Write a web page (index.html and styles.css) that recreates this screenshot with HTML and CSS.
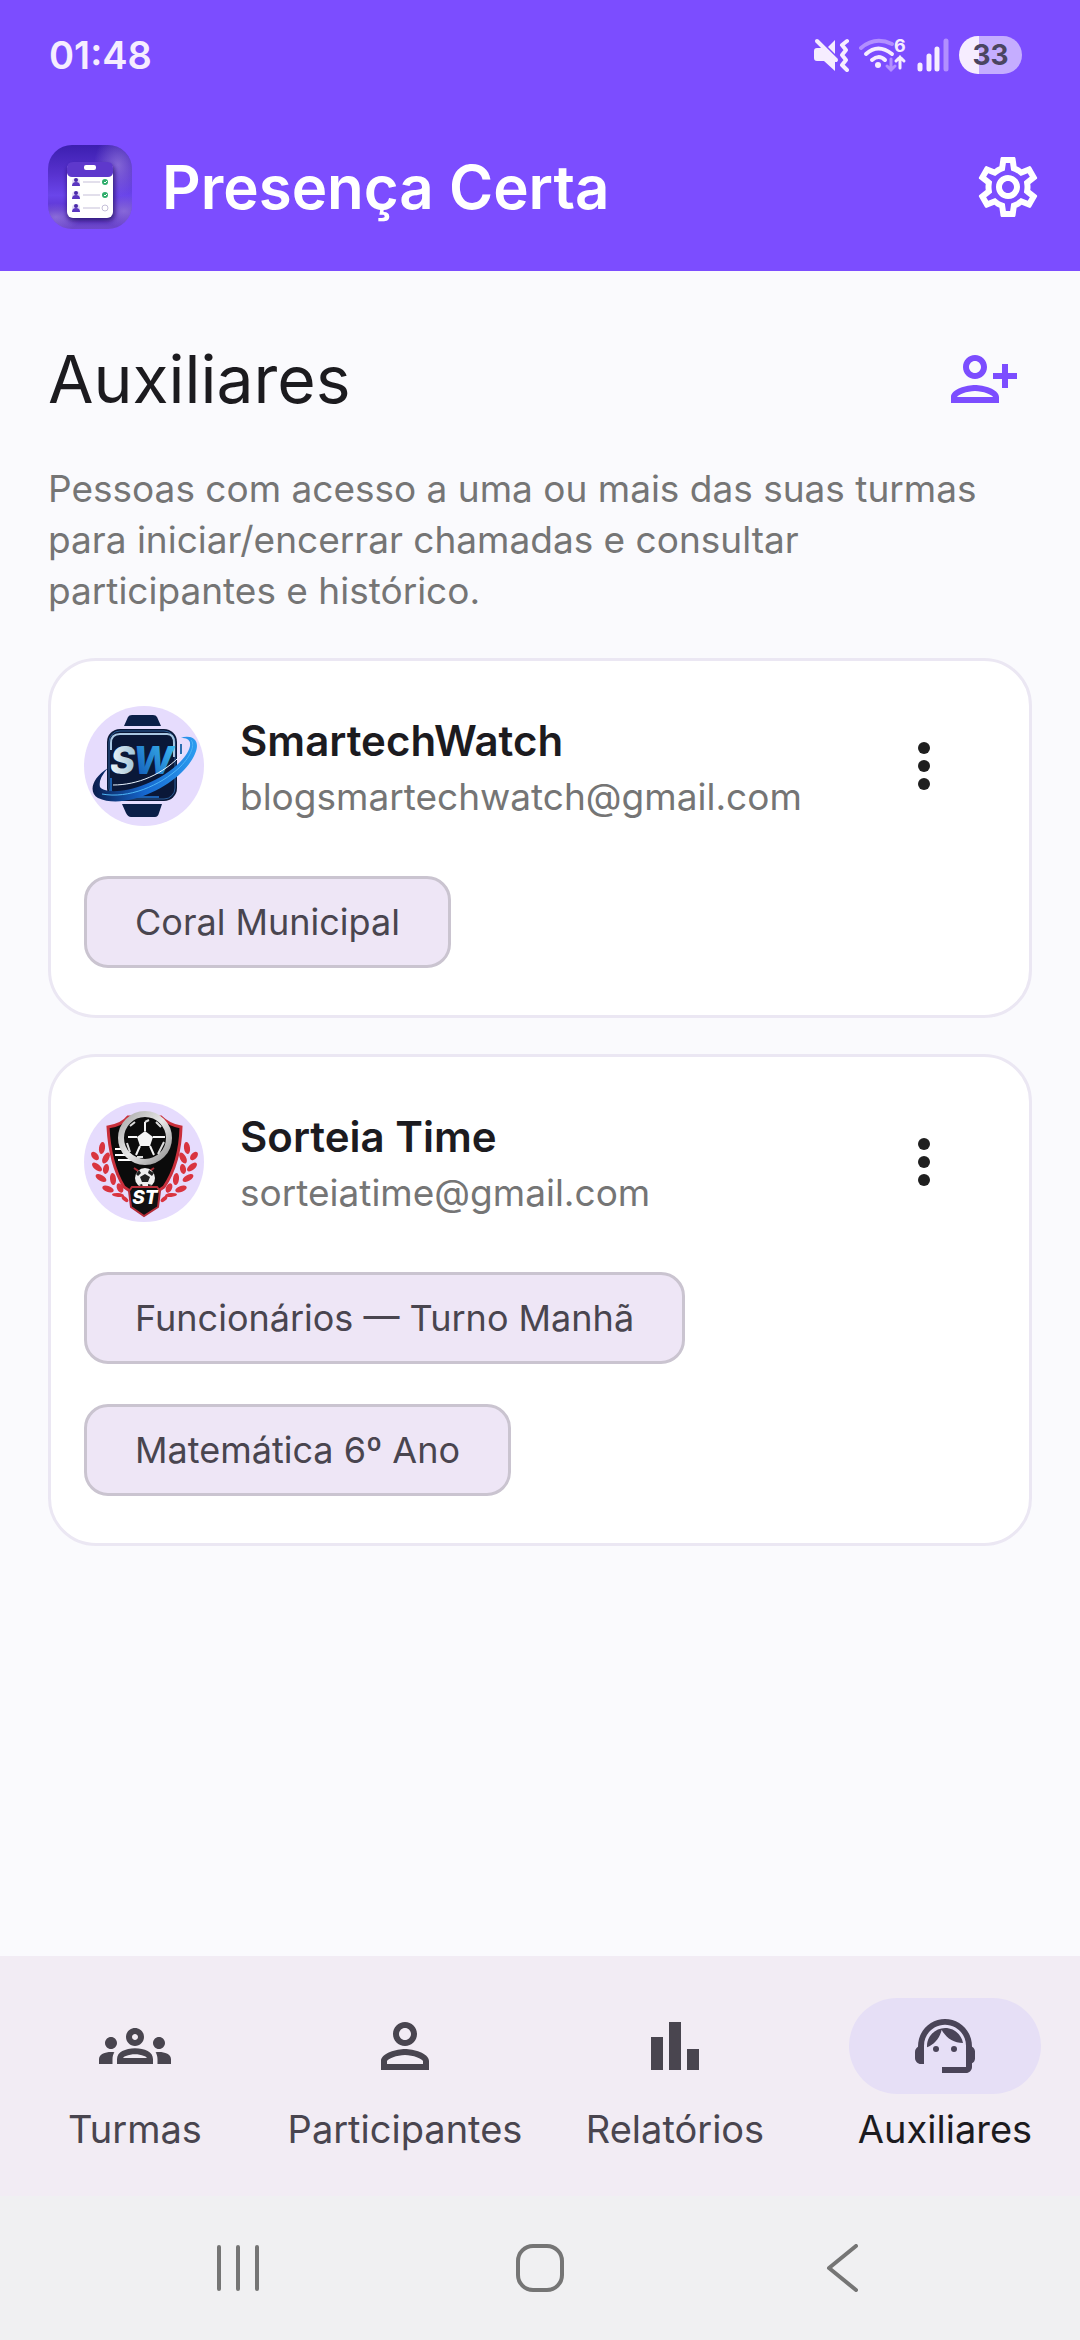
FILE: index.html
```html
<!DOCTYPE html>
<html lang="pt-BR">
<head>
<meta charset="utf-8">
<meta name="viewport" content="width=device-width, initial-scale=1">
<title>Presença Certa</title>
<link rel="stylesheet" href="styles.css">
</head>
<body>
<header class="top">
  <div class="status">
    <span class="clock">01:48</span>
    <div class="status-icons">
      <svg width="36" height="34" viewBox="0 0 36 34" aria-label="Vibrar">
        <path d="M1 13q0-3 3-3h5l13 13v10L11 23H4q-3 0-3-3z" fill="#f6edff"/>
        <path d="M15 9l7-7v14z" fill="#f6edff"/>
        <path d="M4 3l19 19" stroke="#f6edff" stroke-width="4" stroke-linecap="round"/>
        <path d="M34 3l-5 4 4 5-4 5 4 5-4 5 5 5" fill="none" stroke="#f6edff" stroke-width="4" stroke-linecap="round" stroke-linejoin="round"/>
      </svg>
      <svg class="wifi" width="48" height="44" viewBox="0 -4 48 44" aria-label="Wi-Fi">
        <path d="M2 11q14-12 31-4" fill="none" stroke="#b28fff" stroke-width="4" stroke-linecap="round"/>
        <path d="M7 17q12-11 26 0M13 23q7-6 13 0" fill="none" stroke="#f6edff" stroke-width="4" stroke-linecap="round"/>
        <circle cx="19" cy="28" r="3" fill="#f6edff"/>
        <path d="M32 22v11M28 29l4 4 4-4" fill="none" stroke="#b28fff" stroke-width="3" stroke-linecap="round"/>
        <path d="M41 31V20M37 24l4-4 4 4" fill="none" stroke="#f6edff" stroke-width="3" stroke-linecap="round"/>
        <text x="35" y="15" class="wifi-num">6</text>
      </svg>
      <svg width="32" height="34" viewBox="0 0 32 34" aria-label="Sinal">
        <path d="M3 27v4M12 18v13M20 11v20" stroke="#f6edff" stroke-width="5" stroke-linecap="round"/>
        <path d="M29 3v28" stroke="#b28fff" stroke-width="5" stroke-linecap="round"/>
      </svg>
      <span class="battery">33</span>
    </div>
  </div>
  <div class="appbar">
    <svg class="logo" viewBox="0 0 84 84" aria-hidden="true">
      <defs>
        <linearGradient id="lg1" x1="0" y1="0" x2="0" y2="1">
          <stop offset="0" stop-color="#3c1fb0"/><stop offset=".35" stop-color="#5832cf"/><stop offset=".6" stop-color="#6a45ea"/><stop offset=".78" stop-color="#5b33cf"/><stop offset="1" stop-color="#6e49c9"/>
        </linearGradient>
        <radialGradient id="lg2"><stop offset="0" stop-color="#a58ce0" stop-opacity=".6"/><stop offset="1" stop-color="#a58ce0" stop-opacity="0"/></radialGradient>
        <filter id="sh" x="-30%" y="-30%" width="160%" height="160%"><feGaussianBlur stdDeviation="2"/></filter>
        <clipPath id="lc"><rect width="84" height="84" rx="24"/></clipPath>
      </defs>
      <g clip-path="url(#lc)">
        <rect width="84" height="84" fill="url(#lg1)"/>
        <ellipse cx="70" cy="20" rx="24" ry="32" fill="url(#lg2)"/>
        <ellipse cx="76" cy="66" rx="28" ry="16" fill="url(#lg2)"/>
        <ellipse cx="8" cy="72" rx="26" ry="14" fill="url(#lg2)"/>
        <rect x="19" y="20" width="48" height="56" rx="7" fill="#24105f" opacity=".7" filter="url(#sh)"/>
        <rect x="19" y="18" width="46" height="55" rx="6" fill="#fff"/>
        <path d="M19 28v-5q0-6 6-6h34q6 0 6 6v5q-1 4-5 4H24q-4 0-5-4z" fill="#5e38cc"/>
        <rect x="36" y="20" width="12" height="5" rx="2" fill="#fff"/>
        <g id="lrow">
          <circle cx="28" cy="37" r="4" fill="#e4dcf8"/>
          <circle cx="28" cy="35" r="2" fill="#4a2aa8"/><path d="M24 41q0-4 4-4t4 4z" fill="#5a36c0"/>
          <path d="M35 37h17" stroke="#c5bfd8" stroke-width="1"/>
        </g>
        <use href="#lrow" y="13"/><use href="#lrow" y="26"/>
        <g fill="#2fae6c"><circle cx="57" cy="37" r="3"/><circle cx="57" cy="50" r="3"/></g>
        <path d="M56 37l1 1 2-2M56 50l1 1 2-2" fill="none" stroke="#fff"/>
        <circle cx="57" cy="63" r="3" fill="#fff" stroke="#c5bfd8"/>
      </g>
    </svg>
    <h1 class="app-title">Presença Certa</h1>
    <button class="icon-btn gear" type="button" aria-label="Configurações">
      <svg class="icon" viewBox="0 0 24 24"><path d="M19.43 12.98c.04-.32.07-.64.07-.98 0-.34-.03-.66-.07-.98l2.11-1.65c.19-.15.24-.42.12-.64l-2-3.46c-.09-.16-.26-.25-.44-.25-.06 0-.12.01-.17.03l-2.49 1c-.52-.4-1.08-.73-1.69-.98l-.38-2.65C14.46 2.18 14.25 2 14 2h-4c-.25 0-.46.18-.49.42l-.38 2.65c-.61.25-1.17.59-1.69.98l-2.49-1c-.06-.02-.12-.03-.18-.03-.17 0-.34.09-.43.25l-2 3.46c-.13.22-.07.49.12.64l2.11 1.65c-.04.32-.07.65-.07.98 0 .33.03.66.07.98l-2.11 1.65c-.19.15-.24.42-.12.64l2 3.46c.09.16.26.25.44.25.06 0 .12-.01.17-.03l2.49-1c.52.4 1.08.73 1.69.98l.38 2.65c.03.24.24.42.49.42h4c.25 0 .46-.18.49-.42l.38-2.65c.61-.25 1.17-.59 1.69-.98l2.49 1c.06.02.12.03.18.03.17 0 .34-.09.43-.25l2-3.46c.12-.22.07-.49-.12-.64l-2.11-1.65zm-1.98-1.71c.04.31.05.52.05.73 0 .21-.02.43-.05.73l-.14 1.13.89.7 1.08.84-.7 1.21-1.27-.51-1.04-.42-.9.68c-.43.32-.84.56-1.25.73l-1.06.43-.16 1.13-.2 1.35h-1.4l-.19-1.35-.16-1.13-1.06-.43c-.43-.18-.83-.41-1.23-.71l-.91-.7-1.06.43-1.27.51-.7-1.21 1.08-.84.89-.7-.14-1.13c-.03-.31-.05-.54-.05-.74s.02-.43.05-.73l.14-1.13-.89-.7-1.08-.84.7-1.21 1.27.51 1.04.42.9-.68c.43-.32.84-.56 1.25-.73l1.06-.43.16-1.13.2-1.35h1.39l.19 1.35.16 1.13 1.06.43c.43.18.83.41 1.23.71l.91.7 1.06-.43 1.27-.51.7 1.21-1.07.85-.89.7.14 1.13zM12 8c-2.21 0-4 1.79-4 4s1.79 4 4 4 4-1.79 4-4-1.79-4-4-4zm0 6c-1.1 0-2-.9-2-2s.9-2 2-2 2 .9 2 2-.9 2-2 2z"/></svg>
    </button>
  </div>
</header>

<main class="content">
  <div class="page-head">
    <h2 class="page-title">Auxiliares</h2>
    <button class="icon-btn add" type="button" aria-label="Adicionar auxiliar">
      <svg class="icon" viewBox="0 0 24 24"><path d="M13 8c0-2.21-1.79-4-4-4S5 5.79 5 8s1.79 4 4 4 4-1.79 4-4zm-2 0c0 1.1-.9 2-2 2s-2-.9-2-2 .9-2 2-2 2 .9 2 2zM1 18v2h16v-2c0-2.66-5.33-4-8-4s-8 1.34-8 4zm2 0c.2-.71 3.3-2 6-2 2.69 0 5.78 1.28 6 2H3zm17-3v-3h3v-2h-3V7h-2v3h-3v2h3v3h2z"/></svg>
    </button>
  </div>
  <p class="intro">Pessoas com acesso a uma ou mais das suas turmas para iniciar/encerrar chamadas e consultar participantes e histórico.</p>

  <section class="cards">
    <article class="card">
      <div class="person">
        <svg class="avatar" viewBox="0 0 120 120" aria-hidden="true">
          <defs>
            <linearGradient id="w1" x1="0" x2="1"><stop offset="0" stop-color="#eef3f6"/><stop offset="1" stop-color="#9fc4d8"/></linearGradient>
            <linearGradient id="w2" x1="0" x2="1" y1="1" y2="0"><stop offset="0" stop-color="#0c4fb0"/><stop offset="1" stop-color="#41c4f8"/></linearGradient>
            <linearGradient id="w3" x1="0" x2="1" y1="0" y2="0"><stop offset="0" stop-color="#0a1c4c"/><stop offset=".5" stop-color="#1567cf"/><stop offset="1" stop-color="#2c9cf0"/></linearGradient>
          </defs>
          <circle cx="60" cy="60" r="60" fill="#e6dcfd"/>
          <path d="M40 20l4-9q1-2 4-2h21q3 0 4 2l4 9zM38 98l4 9q2 4 5 4h24q3 0 4-4l3-9z" fill="#0b1f48"/>
          <rect x="23" y="23" width="70" height="72" rx="13" fill="#0a1838"/>
          <rect x="25" y="25" width="66" height="68" rx="11" fill="none" stroke="#2b5d97" stroke-width="1"/>
          <path d="M27 44v-7q0-9 9-9h47q7 0 7 9v14" fill="none" stroke="#a9c7e2" stroke-width="2"/>
          <path d="M27 72v12q0 7 6 7h42" fill="none" stroke="#1c5fae" stroke-width="2"/>
          <path d="M97 38v10" stroke="#2b6db0" stroke-width="2"/>
          <text x="26" y="68" class="sw"><tspan fill="url(#w1)">S</tspan></text>
          <text x="49" y="68" class="sw"><tspan fill="url(#w2)">W</tspan></text>
          <path d="M24 62C8 72 4 86 14 92 38 103 78 86 98 66 114 50 118 34 106 31q-5-1-9 1 10-1 9 8c-3 14-24 30-44 38C40 87 20 87 16 81q-2-8 8-19z" fill="url(#w3)"/>
          <path d="M18 88c26 5 58-8 78-27 12-12 15-23 11-27" fill="none" stroke="#4eb6f6" stroke-width="1"/>
          <path d="M29 79c24 0 50-10 70-32" fill="none" stroke="#e8f4ff" stroke-width="1"/>
        </svg>
        <div class="who">
          <h3 class="name">SmartechWatch</h3>
          <p class="mail">blogsmartechwatch@gmail.com</p>
        </div>
        <button class="icon-btn more" type="button" aria-label="Mais opções de SmartechWatch">
          <svg class="icon" viewBox="0 0 24 24"><circle cx="12" cy="6" r="2"/><circle cx="12" cy="12" r="2"/><circle cx="12" cy="18" r="2"/></svg>
        </button>
      </div>
      <ul class="chips">
        <li class="chip">Coral Municipal</li>
      </ul>
    </article>

    <article class="card">
      <div class="person">
        <svg class="avatar" viewBox="0 0 120 120" aria-hidden="true">
          <defs>
            <linearGradient id="s1" x1="0" y1="0" x2="1" y2="1"><stop offset="0" stop-color="#a9a9a9"/><stop offset=".5" stop-color="#e8e8e8"/><stop offset="1" stop-color="#8f8f8f"/></linearGradient>
            <g id="branch" fill="#d9343f">
              <ellipse cx="18" cy="46" rx="3" ry="6" transform="rotate(8 18 46)"/>
              <ellipse cx="11" cy="54" rx="3" ry="5" transform="rotate(-40 11 54)"/>
              <ellipse cx="22" cy="56" rx="3" ry="6" transform="rotate(28 22 56)"/>
              <ellipse cx="13" cy="65" rx="3" ry="6" transform="rotate(-50 13 65)"/>
              <ellipse cx="22" cy="67" rx="3" ry="5" transform="rotate(10 22 67)"/>
              <ellipse cx="17" cy="76" rx="3" ry="6" transform="rotate(-60 17 76)"/>
              <ellipse cx="29" cy="77" rx="3" ry="6" transform="rotate(-6 29 77)"/>
              <ellipse cx="24" cy="87" rx="3" ry="6" transform="rotate(-70 24 87)"/>
              <ellipse cx="36" cy="86" rx="3" ry="5" transform="rotate(-24 36 86)"/>
              <ellipse cx="34" cy="93" rx="2" ry="6" transform="rotate(-86 34 93)"/>
              <ellipse cx="41" cy="97" rx="2" ry="4" transform="rotate(-50 41 97)"/>
            </g>
          </defs>
          <circle cx="60" cy="60" r="60" fill="#e6dcfd"/>
          <use href="#branch"/>
          <use href="#branch" transform="matrix(-1 0 0 1 121 0)"/>
          <path d="M24 25q14-2 20-10h33q8 8 20 10-1 36-17 60l-20 14-20-14Q26 62 24 25z" fill="#0b0b0b" stroke="#c92f3b" stroke-width="3"/>
          <path d="M31 47h10M31 53h13M34 58h15" stroke="#fff" stroke-width="2"/>
          <path d="M50 66l10 7 10-7" fill="none" stroke="#a92a33" stroke-width="2"/>
          <circle cx="61" cy="36" r="24" fill="#0b0b0b" stroke="url(#s1)" stroke-width="6"/>
          <path d="M61 29l8 6-3 9H56l-3-9z" fill="#f4f4f4"/>
          <path d="M61 29V20M69 35h12M66 44l4 9M56 44l-4 9M53 35H44" stroke="#f4f4f4" stroke-width="2"/>
          <path d="M46 24l5-4M61 20l4-2M72 20l5 5M43 41l3 9M80 40l-6 12M53 55h6" stroke="#ddd" stroke-width="2"/>
          <circle cx="61" cy="76" r="10" fill="#efefef"/>
          <path d="M61 72l5 3-2 5h-6l-2-5zM52 72l3-4 2 3-3 3zM65 68l5 3-2 3-4-3zM55 83l3-1 1 3zM64 82l4 1-4 2z" fill="#222"/>
          <path d="M48 85h25l3 4-2 16-14 9-13-9-2-16z" fill="#111" stroke="#b52d38" stroke-width="2"/>
          <text x="61" y="102" class="st">ST</text>
        </svg>
        <div class="who">
          <h3 class="name">Sorteia Time</h3>
          <p class="mail">sorteiatime@gmail.com</p>
        </div>
        <button class="icon-btn more" type="button" aria-label="Mais opções de Sorteia Time">
          <svg class="icon" viewBox="0 0 24 24"><circle cx="12" cy="6" r="2"/><circle cx="12" cy="12" r="2"/><circle cx="12" cy="18" r="2"/></svg>
        </button>
      </div>
      <ul class="chips">
        <li class="chip">Funcionários — Turno Manhã</li>
        <li class="chip">Matemática 6º Ano</li>
      </ul>
    </article>
  </section>
</main>

<nav class="tabs" aria-label="Principal">
  <a class="tab" href="#turmas">
    <span class="tab-icon"><svg class="icon" viewBox="0 0 24 24"><path d="M4 13c1.1 0 2-.9 2-2s-.9-2-2-2-2 .9-2 2 .9 2 2 2zm1.130 1.100c-.37-.06-.74-.1-1.130-.1-.99 0-1.930.21-2.780.58C.48 14.900 0 15.620 0 16.430V18h4.500v-1.610c0-.83.23-1.610.63-2.290zM20 13c1.100 0 2-.9 2-2s-.9-2-2-2-2 .9-2 2 .9 2 2 2zm4 3.430c0-.81-.48-1.530-1.220-1.850-.85-.37-1.790-.58-2.780-.58-.39 0-.76.04-1.130.1.4.68.63 1.460.63 2.290V18H24v-1.570zm-7.760-2.780c-1.170-.52-2.610-.9-4.240-.9s-3.070.39-4.240.9C6.680 14.130 6 15.210 6 16.390V18h12v-1.610c0-1.180-.68-2.260-1.760-2.740zM8.070 16c.09-.23.13-.39.91-.69.97-.38 1.990-.56 3.020-.56s2.050.18 3.020.56c.77.3.81.46.91.69H8.070zM12 8c.55 0 1 .45 1 1s-.45 1-1 1-1-.45-1-1 .45-1 1-1m0-2c-1.660 0-3 1.340-3 3s1.340 3 3 3 3-1.340 3-3-1.340-3-3-3z"/></svg></span>
    <span>Turmas</span>
  </a>
  <a class="tab" href="#participantes">
    <span class="tab-icon"><svg class="icon" viewBox="0 0 24 24"><path d="M12 6c1.100 0 2 .9 2 2s-.9 2-2 2-2-.9-2-2 .9-2 2-2m0 9c2.700 0 5.800 1.290 6 2v1H6v-.99c.2-.72 3.300-2.010 6-2.010m0-11C9.790 4 8 5.790 8 8s1.790 4 4 4 4-1.790 4-4-1.790-4-4-4zm0 9c-2.670 0-8 1.340-8 4v3h16v-3c0-2.660-5.330-4-8-4z"/></svg></span>
    <span>Participantes</span>
  </a>
  <a class="tab" href="#relatorios">
    <span class="tab-icon"><svg class="icon" viewBox="0 0 24 24"><path d="M4 9h4v11H4zM16 13h4v7h-4zM10 4h4v16h-4z"/></svg></span>
    <span>Relatórios</span>
  </a>
  <a class="tab tab-active" href="#auxiliares" aria-current="page">
    <span class="tab-icon"><svg class="icon" viewBox="0 0 24 24"><path d="M21 12.220C21 6.730 16.740 3 12 3c-4.690 0-9 3.650-9 9.280-.6.34-1 .98-1 1.720v2c0 1.100.9 2 2 2h1v-6.100c0-3.870 3.130-7 7-7s7 3.130 7 7V19h-8v2h8c1.100 0 2-.9 2-2v-1.220c.59-.31 1-.92 1-1.640v-2.300c0-.7-.41-1.310-1-1.620z"/><circle cx="9" cy="13" r="1"/><circle cx="15" cy="13" r="1"/><path d="M18 11.030C17.520 8.180 15.040 6 12.050 6c-3.030 0-6.290 2.510-6.030 6.450 2.470-1.010 4.330-3.210 4.860-5.890 1.310 2.630 4 4.440 7.120 4.470z"/></svg></span>
    <span>Auxiliares</span>
  </a>
</nav>

<div class="sysnav">
  <button class="sys-btn" type="button" aria-label="Recentes"><svg viewBox="0 0 48 48"><path d="M5 3v42M24 3v42M43 3v42"/></svg></button>
  <button class="sys-btn" type="button" aria-label="Início"><svg viewBox="0 0 48 48"><rect x="2" y="2" width="44" height="44" rx="15"/></svg></button>
  <button class="sys-btn" type="button" aria-label="Voltar"><svg viewBox="0 0 48 48"><path d="M38 2L11 24l27 22"/></svg></button>
</div>
</body>
</html>
```
FILE: styles.css
```css
* {
  box-sizing: border-box;
}

body {
  margin: 0;
  min-height: 100vh;
  display: flex;
  flex-direction: column;
  background: #fafafd;
  color: #1c1b1f;
  font-family: Inter, "Noto Sans", sans-serif;
  font-size: 37px;
}

h1, h2, h3, p, ul {
  margin: 0;
  padding: 0;
}

button {
  padding: 0;
  border: 0;
  background: none;
  font: inherit;
}

svg {
  display: block;
  flex: none;
}

.top {
  background: #7c4dff;
  color: #fff;
}

.status {
  display: flex;
  align-items: center;
  justify-content: space-between;
  height: 103px;
  padding: 7px 58px 0 49px;
}

.clock {
  color: #f6edff;
  font-size: 38px;
  font-weight: 600;
}

.status-icons {
  display: flex;
  align-items: center;
  gap: 10px;
}

.wifi-num {
  fill: #f6edff;
  font-size: 18px;
  font-weight: 700;
}

.battery {
  width: 63px;
  height: 38px;
  border-radius: 19px;
  background: linear-gradient(90deg, #f6edff 20px, #c5adff 20px);
  color: #4b4560;
  font-size: 28px;
  font-weight: 700;
  line-height: 38px;
  text-align: center;
}

.appbar {
  display: flex;
  align-items: center;
  height: 168px;
  padding: 0 24px 0 48px;
}

.logo {
  width: 84px;
  height: 84px;
  margin-right: 30px;
}

.app-title {
  flex: 1;
  font-size: 60px;
  font-weight: 600;
}

.icon {
  width: 72px;
  height: 72px;
  fill: currentColor;
}

.icon-btn {
  display: grid;
  place-items: center;
  flex: none;
  width: 96px;
  height: 144px;
}

.gear {
  color: #fff;
}

.add {
  color: #7c4dff;
}

.more {
  height: 120px;
  margin-right: 24px;
  color: #1f1f1f;
}

.content {
  flex: 1;
  padding: 36px 48px;
}

.page-head {
  display: flex;
  align-items: center;
  justify-content: space-between;
}

.page-title {
  font-size: 66px;
  font-weight: 400;
}

.intro {
  margin: 12px 0 42px;
  color: #757575;
  line-height: 51px;
}

.cards {
  display: grid;
  gap: 36px;
}

.card {
  padding: 45px 33px 47px;
  border: 3px solid #ebe7f3;
  border-radius: 48px;
  background: #fff;
}

.person {
  display: flex;
  align-items: center;
}

.avatar {
  width: 120px;
  height: 120px;
  margin-right: 36px;
}

.who {
  flex: 1;
  min-width: 0;
}

.name {
  font-size: 42px;
  font-weight: 600;
  line-height: 60px;
}

.mail {
  color: #757575;
  line-height: 51px;
}

.sw {
  font-size: 38px;
  font-style: italic;
  font-weight: 800;
}

.st {
  fill: #fff;
  font-size: 19px;
  font-style: italic;
  font-weight: 800;
  text-anchor: middle;
}

.chips {
  display: flex;
  flex-direction: column;
  align-items: flex-start;
  gap: 40px;
  margin-top: 50px;
  list-style: none;
}

.chip {
  padding: 17px 48px;
  border: 3px solid #cac4d0;
  border-radius: 24px;
  background: #eee6f6;
  color: #49454f;
  font-size: 36px;
  line-height: 52px;
}

.tabs {
  display: grid;
  grid-template-columns: repeat(4, 1fr);
  height: 240px;
  padding-top: 42px;
  background: #f2ecf4;
}

.tab {
  display: flex;
  flex-direction: column;
  align-items: center;
  gap: 11px;
  color: #49454f;
  font-size: 38px;
  line-height: 48px;
  text-decoration: none;
}

.tab-icon {
  display: grid;
  place-items: center;
  width: 192px;
  height: 96px;
  border-radius: 48px;
}

.tab-active {
  color: #1c1b1f;
}

.tab-active .tab-icon {
  background: #e6dff6;
  color: #4a4458;
}

.sysnav {
  display: flex;
  align-items: center;
  justify-content: center;
  gap: 254px;
  height: 144px;
  background: #f0f0f2;
}

.sys-btn {
  width: 48px;
  height: 48px;
}

.sys-btn svg {
  fill: none;
  stroke: #757575;
  stroke-width: 4;
  stroke-linecap: round;
  stroke-linejoin: round;
}
```
